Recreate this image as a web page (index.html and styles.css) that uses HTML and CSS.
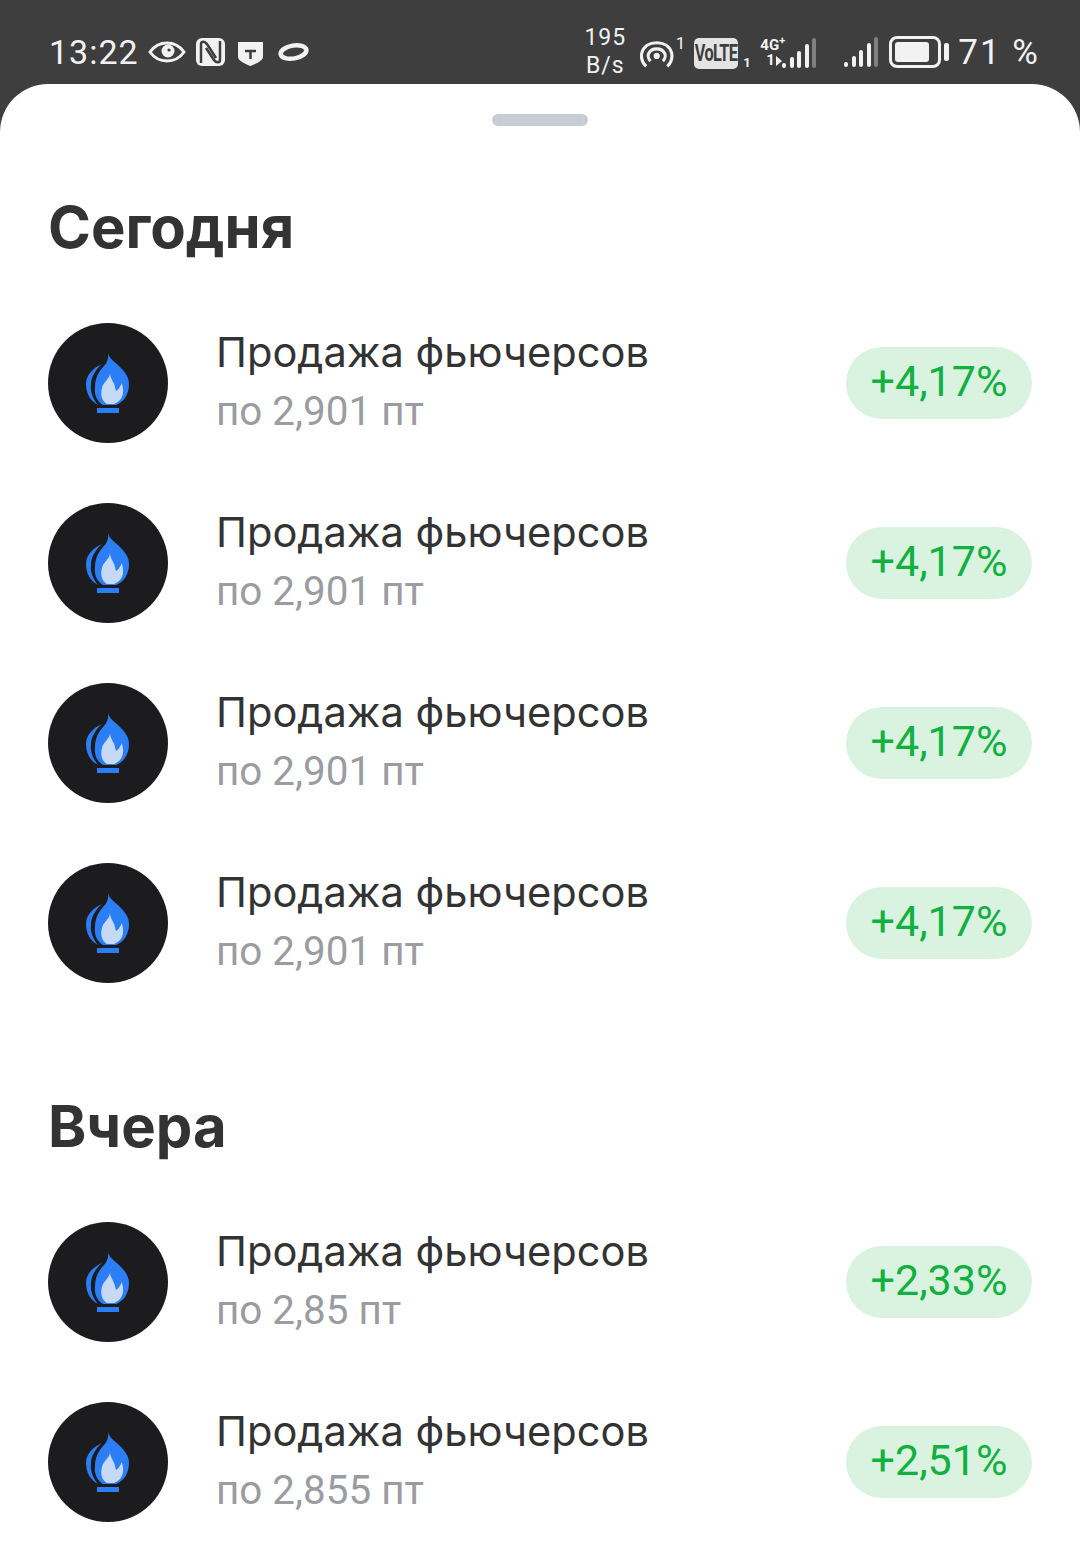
FILE: index.html
```html
<!DOCTYPE html>
<html lang="ru">
<head>
<meta charset="UTF-8">
<title>Сделки</title>
<link rel="stylesheet" href="styles.css">
</head>
<body>
<svg class="defs" width="0" height="0">
  <symbol id="flame" viewBox="0 0 120 120">
    <path class="flame_main" d="M54 41C45 45 38 52 38 61C38 70 42 78 50 82C45 76 42 69 43 61C43 55 47 47 54 41Z"/>
    <path class="flame_main" d="M60 29C61 36 66 38 71 43C77 49 81 54 81 61C81 71 76 79 68 82L55 82C49 78 46 72 47 64C47 55 51 48 56 43C59 40 61 35 60 29Z"/>
    <path class="flame_inner" d="M62 50C62 56 55 59 54 65C52 72 54 78 59 81L66 81C72 79 76 73 75 66C75 64 74 62 74 60C72 64 70 67 68 68C67 65 67 62 65 59C64 56 62 54 62 50Z"/>
    <rect class="flame_main" x="49" y="85" width="22" height="5"/>
  </symbol>
</svg>

<div class="status">
  <div class="status_left">
    <span class="time">13:22</span>
    <svg class="ico ico_eye" width="38" height="24" viewBox="0 0 38 24"><path class="line" d="M2 12C7 5 12 3 19 3C26 3 31 5 36 12C31 19 26 21 19 21C12 21 7 19 2 12Z" stroke-width="3"/><circle class="fill" cx="20" cy="11" r="6.5"/><circle class="hole" cx="21" cy="10" r="1.6"/></svg>
    <svg class="ico ico_nfc" width="29" height="28" viewBox="0 0 29 28"><rect class="fill" x="0" y="0" width="29" height="28" rx="6"/><path class="cut" d="M5 25V6C5 3 9 3 11 6L20 20M24 3V22C24 25 20 25 18 22L10 10"/></svg>
    <svg class="ico ico_shield" width="25" height="25" viewBox="0 0 25 25"><path class="fill" d="M0 1H25V16C25 19 20 22 12.500 25C5 22 0 19 0 16Z"/><path class="cut" d="M7 10H18M12.500 10V18" stroke-width="3.500"/></svg>
    <svg class="ico" width="31" height="20" viewBox="0 0 31 20"><ellipse class="line" cx="15.500" cy="10" rx="13" ry="6.500" transform="rotate(-10 15.500 10)" stroke-width="4.500"/></svg>
  </div>
  <div class="status_right">
    <div class="speed"><span>195</span><span>B/s</span></div>
    <div class="hotspot">
      <svg width="36" height="32" viewBox="0 0 38 34"><path class="line" d="M7 30C2 25 1 20 2 15C4 7 11 3 19 3C27 3 34 7 36 15C37 20 36 25 31 30" stroke-width="3.500"/><path class="line" d="M12 24C9 21 9 17 10 15C12 11 15 10 19 10C23 10 26 11 28 15C29 17 29 21 26 24" stroke-width="3.500"/><circle class="fill" cx="19" cy="18" r="3.500"/></svg>
      <span class="sup">1</span>
    </div>
    <div class="volte"><span class="volte_box"><span class="volte_text">VoLTE</span></span><span class="volte_num">1</span></div>
    <div class="net">
      <div class="net_labels"><span class="net_g">4G<sup>+</sup></span><span class="net_one">1<i class="arrows"></i></span></div>
      <div class="bars"><i class="b1"></i><i class="b2"></i><i class="b3"></i><i class="b4"></i><i class="b5 off"></i></div>
    </div>
    <div class="bars bars_solo"><i class="b1"></i><i class="b2"></i><i class="b3"></i><i class="b4"></i><i class="b5 off"></i></div>
    <div class="battery"><div class="battery_body"><div class="battery_level"></div></div><div class="battery_cap"></div></div>
    <span class="percent">71 %</span>
  </div>
</div>

<div class="sheet">
  <div class="grabber"></div>

  <h2>Сегодня</h2>
  <ul class="deals">
    <li class="deal">
      <div class="avatar"><svg width="120" height="120"><use href="#flame"/></svg></div>
      <div class="info"><div class="name">Продажа фьючерсов</div><div class="sub">по 2,901 пт</div></div>
      <div class="pill">+4,17%</div>
    </li>
    <li class="deal">
      <div class="avatar"><svg width="120" height="120"><use href="#flame"/></svg></div>
      <div class="info"><div class="name">Продажа фьючерсов</div><div class="sub">по 2,901 пт</div></div>
      <div class="pill">+4,17%</div>
    </li>
    <li class="deal">
      <div class="avatar"><svg width="120" height="120"><use href="#flame"/></svg></div>
      <div class="info"><div class="name">Продажа фьючерсов</div><div class="sub">по 2,901 пт</div></div>
      <div class="pill">+4,17%</div>
    </li>
    <li class="deal">
      <div class="avatar"><svg width="120" height="120"><use href="#flame"/></svg></div>
      <div class="info"><div class="name">Продажа фьючерсов</div><div class="sub">по 2,901 пт</div></div>
      <div class="pill">+4,17%</div>
    </li>
  </ul>

  <h2 class="second">Вчера</h2>
  <ul class="deals">
    <li class="deal">
      <div class="avatar"><svg width="120" height="120"><use href="#flame"/></svg></div>
      <div class="info"><div class="name">Продажа фьючерсов</div><div class="sub">по 2,85 пт</div></div>
      <div class="pill">+2,33%</div>
    </li>
    <li class="deal">
      <div class="avatar"><svg width="120" height="120"><use href="#flame"/></svg></div>
      <div class="info"><div class="name">Продажа фьючерсов</div><div class="sub">по 2,855 пт</div></div>
      <div class="pill">+2,51%</div>
    </li>
  </ul>
</div>
</body>
</html>
```
FILE: styles.css
```css
* {
  margin: 0;
  padding: 0;
  box-sizing: border-box;
}
html, body {
  width: 1080px;
  height: 1541px;
  overflow: hidden;
}
body {
  background-color: #3e3e3e;
  font-family: Inter, "Noto Sans", sans-serif;
}
li {
  list-style-type: none;
}
.defs {
  display: block;
}

/* status bar */
.status {
  height: 84px;
  padding: 26px 40px 0 49px;
  display: flex;
  justify-content: space-between;
  color: #f2f2f2;
  font-family: Roboto, sans-serif;
}
.status_left {
  display: flex;
  align-items: center;
  height: 52px;
}
.time {
  font-size: 34px;
  letter-spacing: 1px;
  margin-right: 9px;
}
.ico {
  flex: none;
}
.ico_eye {
  margin-right: 10px;
}
.ico_nfc {
  margin-right: 13px;
}
.ico_shield {
  margin-right: 15px;
  margin-top: 3px;
}
.line {
  fill: none;
  stroke: #f2f2f2;
}
.fill {
  fill: #f2f2f2;
}
.hole {
  fill: #3e3e3e;
}
.cut {
  fill: none;
  stroke: #3e3e3e;
  stroke-width: 2.5;
}
.status_right {
  display: flex;
  align-items: center;
  height: 52px;
}
.speed {
  display: flex;
  flex-direction: column;
  align-items: center;
  width: 42px;
  font-size: 23px;
  line-height: 28px;
  letter-spacing: 1px;
  margin-right: 14px;
}
.hotspot {
  display: flex;
  width: 45px;
  height: 38px;
  align-items: flex-end;
  margin-right: 9px;
}
.sup {
  align-self: flex-start;
  font-size: 17px;
  line-height: 20px;
  margin-left: 2px;
}
.volte {
  display: flex;
  align-items: flex-end;
  height: 32px;
  margin-top: 2px;
  margin-right: 11px;
}
.volte_box {
  display: block;
  width: 44px;
  height: 31px;
  background-color: #e4e4e4;
  color: #3e3e3e;
  border-radius: 5px;
  text-align: center;
}
.volte_text {
  display: block;
  font-size: 24px;
  font-weight: 700;
  line-height: 31px;
  letter-spacing: -1px;
  transform: scaleX(.68);
  margin: 0 -10px;
}
.volte_num {
  font-size: 13px;
  font-weight: 700;
  line-height: 13px;
  margin-left: 5px;
  width: 6px;
}
.net {
  display: flex;
  align-items: flex-end;
  height: 32px;
  margin-right: 28px;
}
.net_labels {
  display: flex;
  flex-direction: column;
  font-size: 15px;
  font-weight: 700;
  line-height: 15px;
  width: 22px;
  white-space: nowrap;
}
.net_g sup {
  font-size: 11px;
  line-height: 0;
}
.net_one {
  padding-left: 6px;
  display: flex;
  align-items: center;
}
.arrows {
  width: 0;
  height: 0;
  margin-left: 1px;
  border-left: 6px solid #f2f2f2;
  border-top: 5px solid transparent;
  border-bottom: 5px solid transparent;
}
.bars {
  display: flex;
  align-items: flex-end;
  gap: 3.5px;
  height: 30px;
}
.bars i {
  display: block;
  width: 4px;
  background-color: #f2f2f2;
  border-radius: 2px;
}
.bars .off {
  background-color: #808080;
}
.b1 { height: 5px; }
.b2 { height: 11px; }
.b3 { height: 17px; }
.b4 { height: 24px; }
.b5 { height: 30px; }
.bars_solo {
  margin-right: 11px;
}
.battery {
  display: flex;
  align-items: center;
  margin-right: 9px;
}
.battery_body {
  width: 52px;
  height: 32px;
  border: 3px solid #f2f2f2;
  border-radius: 8px;
  padding: 3px;
}
.battery_level {
  width: 34px;
  height: 100%;
  background-color: #f2f2f2;
  border-radius: 3px;
}
.battery_cap {
  width: 5px;
  height: 18px;
  margin-left: 3px;
  background-color: #f2f2f2;
  border-radius: 2px;
}
.percent {
  font-size: 35px;
  letter-spacing: 2px;
  white-space: nowrap;
}

/* sheet */
.sheet {
  height: 1457px;
  background-color: #fff;
  border-radius: 48px 48px 0 0;
  padding: 30px 48px 0;
  color: #333;
}
.grabber {
  width: 96px;
  height: 12px;
  margin: 0 auto;
  border-radius: 6px;
  background-color: #c8ccd4;
}
h2 {
  font-size: 58px;
  font-weight: 700;
  line-height: 72px;
  margin-top: 65px;
  margin-bottom: 60px;
}
h2.second {
  margin-top: 107px;
  margin-bottom: 60px;
}
.deals {
  display: flex;
  flex-direction: column;
  gap: 60px;
}
.deal {
  display: flex;
  align-items: center;
  height: 120px;
}
.avatar {
  width: 120px;
  height: 120px;
  border-radius: 100%;
  background-color: #1c1c1e;
  flex: none;
}
.flame_main {
  fill: #2b7ef5;
}
.flame_inner {
  fill: #c6d9f5;
}
.info {
  flex: 1;
  margin-left: 48px;
  padding-bottom: 2px;
}
.name {
  font-size: 41.6px;
  line-height: 60px;
  color: #333;
}
.sub {
  font-family: Roboto, sans-serif;
  font-size: 40.4px;
  line-height: 60px;
  color: #9a9ca2;
}
.pill {
  width: 186px;
  height: 72px;
  padding-bottom: 3px;
  border-radius: 36px;
  background-color: #d9f3e0;
  color: #12b03f;
  font-family: Roboto, sans-serif;
  font-size: 43px;
  line-height: 69px;
  text-align: center;
}
```
